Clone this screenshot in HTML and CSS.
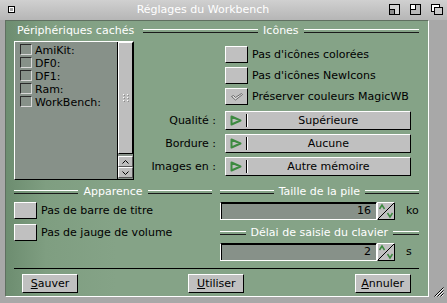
FILE: index.html
```html
<!DOCTYPE html>
<html lang="fr">
<head>
  <meta charset="UTF-8">
  <meta name="viewport" content="width=device-width, initial-scale=1.0">
  <title>Réglages du Workbench</title>
  <link rel="stylesheet" href="styles.css">
</head>
<body>
  <div class="window">
    <div class="titlebar">
      <div class="title-left">
        <svg class="gadget" width="7" height="7" viewBox="0 0 7 7">
          <rect x="0.5" y="0.5" width="6" height="6" fill="#fff" stroke="#000"/>
          <rect x="2" y="2" width="3" height="3" fill="#a0a0a0"/>
        </svg>
      </div>
      <div class="title">Réglages du Workbench</div>
      <div class="title-gadgets">
        <svg class="gadget" width="11" height="11" viewBox="0 0 11 11">
          <rect x="0.5" y="0.5" width="10" height="10" fill="#d4d4d4" stroke="#000"/>
          <rect x="0.5" y="5.5" width="5" height="5" fill="#8c8c8c" stroke="#000"/>
        </svg>
        <svg class="gadget" width="11" height="11" viewBox="0 0 11 11">
          <rect x="0.5" y="0.5" width="10" height="10" fill="#b8b8b8" stroke="#000"/>
          <rect x="0.5" y="0.5" width="5" height="5" fill="#fff" stroke="#000"/>
        </svg>
        <svg class="gadget" width="12" height="11" viewBox="0 0 12 11">
          <rect x="0.5" y="0.5" width="8" height="7" fill="#fff" stroke="#000"/>
          <rect x="3.5" y="3.5" width="8" height="7" fill="#c8c8c8" stroke="#000"/>
        </svg>
      </div>
    </div>

    <div class="frame">
      <div class="panel">
        <div class="section-top">
          <div class="devices">
            <div class="caption">Périphériques cachés</div>
            <div class="listview">
              <div class="list">
                <div class="list-item"><span class="list-box"></span>AmiKit:</div>
                <div class="list-item"><span class="list-box"></span>DF0:</div>
                <div class="list-item"><span class="list-box"></span>DF1:</div>
                <div class="list-item"><span class="list-box"></span>Ram:</div>
                <div class="list-item"><span class="list-box"></span>WorkBench:</div>
              </div>
              <div class="scroller">
                <div class="knob">
                  <svg width="6" height="8" viewBox="0 0 6 8">
                    <rect x="0" y="0" width="1" height="1" fill="#fff"/>
                    <rect x="4" y="0" width="1" height="1" fill="#fff"/>
                    <rect x="0" y="3" width="1" height="1" fill="#fff"/>
                    <rect x="4" y="3" width="1" height="1" fill="#fff"/>
                    <rect x="0" y="6" width="1" height="1" fill="#fff"/>
                    <rect x="4" y="6" width="1" height="1" fill="#fff"/>
                    <rect x="1" y="1" width="1" height="1" fill="#888"/>
                    <rect x="5" y="1" width="1" height="1" fill="#888"/>
                    <rect x="1" y="4" width="1" height="1" fill="#888"/>
                    <rect x="5" y="4" width="1" height="1" fill="#888"/>
                    <rect x="1" y="7" width="1" height="1" fill="#888"/>
                    <rect x="5" y="7" width="1" height="1" fill="#888"/>
                  </svg>
                </div>
                <div class="scroll-arrow">
                  <svg width="7" height="4" viewBox="0 0 7 4"><path d="M0.5 3.5 L3.5 0.5 L6.5 3.5" fill="none" stroke="#000"/></svg>
                </div>
                <div class="scroll-arrow">
                  <svg width="7" height="4" viewBox="0 0 7 4"><path d="M0.5 0.5 L3.5 3.5 L6.5 0.5" fill="none" stroke="#000"/></svg>
                </div>
              </div>
            </div>
          </div>

          <div class="icons">
            <div class="group-title"><span>Icônes</span></div>
            <div class="option"><span class="checkbox"></span>Pas d'icônes colorées</div>
            <div class="option"><span class="checkbox"></span>Pas d'icônes NewIcons</div>
            <div class="option">
              <span class="checkbox">
                <svg width="12" height="8" viewBox="0 0 12 8">
                  <path d="M0.5 3.5 L2.5 2.5 L4.5 4.5 L10.5 0.5 L11.5 1.5 L4.5 7 Z" fill="#e4e4e4" stroke="#6a6a6a" stroke-linejoin="round"/>
                </svg>
              </span>Préserver couleurs MagicWB
            </div>
            <div class="choice first">
              <span class="choice-label">Qualité :</span>
              <div class="cycle">
                <span class="cycle-arrow"><svg width="12" height="11" viewBox="0 0 12 11"><path d="M1.5 1.5 L10.5 5.5 L1.5 9.5 Z" fill="none" stroke="#3d8a40" stroke-width="2" stroke-linejoin="round"/></svg></span>
                <span class="cycle-value">Supérieure</span>
              </div>
            </div>
            <div class="choice">
              <span class="choice-label">Bordure :</span>
              <div class="cycle">
                <span class="cycle-arrow"><svg width="12" height="11" viewBox="0 0 12 11"><path d="M1.5 1.5 L10.5 5.5 L1.5 9.5 Z" fill="none" stroke="#3d8a40" stroke-width="2" stroke-linejoin="round"/></svg></span>
                <span class="cycle-value">Aucune</span>
              </div>
            </div>
            <div class="choice">
              <span class="choice-label">Images en :</span>
              <div class="cycle">
                <span class="cycle-arrow"><svg width="12" height="11" viewBox="0 0 12 11"><path d="M1.5 1.5 L10.5 5.5 L1.5 9.5 Z" fill="none" stroke="#3d8a40" stroke-width="2" stroke-linejoin="round"/></svg></span>
                <span class="cycle-value">Autre mémoire</span>
              </div>
            </div>
          </div>
        </div>

        <div class="section-middle">
          <div class="appearance">
            <div class="group-title"><span>Apparence</span></div>
            <div class="option first"><span class="checkbox"></span>Pas de barre de titre</div>
            <div class="option"><span class="checkbox"></span>Pas de jauge de volume</div>
          </div>
          <div class="numbers">
            <div class="group-title"><span>Taille de la pile</span></div>
            <div class="number-row first">
              <span class="field">16</span>
              <span class="stepper"><svg width="16" height="16" viewBox="0 0 16 16"><line x1="0" y1="16" x2="16" y2="0" stroke="#000"/><path d="M1.5 6 L4 2 L6.5 6" fill="none" stroke="#3d8a40" stroke-width="1.5"/><path d="M9.5 10 L12 14 L14.5 10" fill="none" stroke="#3d8a40" stroke-width="1.5"/></svg></span>
              <span class="unit">ko</span>
            </div>
            <div class="group-title second"><span>Délai de saisie du clavier</span></div>
            <div class="number-row first">
              <span class="field">2</span>
              <span class="stepper"><svg width="16" height="16" viewBox="0 0 16 16"><line x1="0" y1="16" x2="16" y2="0" stroke="#000"/><path d="M1.5 6 L4 2 L6.5 6" fill="none" stroke="#3d8a40" stroke-width="1.5"/><path d="M9.5 10 L12 14 L14.5 10" fill="none" stroke="#3d8a40" stroke-width="1.5"/></svg></span>
              <span class="unit">s</span>
            </div>
          </div>
        </div>

        <div class="separator"></div>

        <div class="buttons">
          <button class="button"><u>S</u>auver</button>
          <button class="button"><u>U</u>tiliser</button>
          <button class="button"><u>A</u>nnuler</button>
        </div>
      </div>
      <div class="side">
        <svg width="10" height="10" viewBox="0 0 10 10">
          <path d="M9.5 0.5 L0.5 9.5 M9.5 3.5 L3.5 9.5 M9.5 6.5 L6.5 9.5" stroke="#000"/>
          <path d="M9.5 1.5 L1.5 9.5 M9.5 4.5 L4.5 9.5 M9.5 7.5 L7.5 9.5" stroke="#fff"/>
        </svg>
      </div>
    </div>
    <div class="bottom-border"></div>
  </div>
</body>
</html>
```

FILE: styles.css
```css
* {
  box-sizing: border-box;
}
body {
  margin: 0;
  font-family: 'DejaVu Sans', sans-serif;
  font-size: 11px;
  color: #000;
  background-color: #a8a8a8;
}
.window {
  width: 447px;
  height: 303px;
  display: flex;
  flex-direction: column;
  background-color: #a8a8a8;
}

/* title bar */
.titlebar {
  height: 20px;
  display: flex;
  align-items: center;
  background: linear-gradient(#d0d0d0, #b6b6b6);
}
.gadget {
  display: block;
}
.title-left {
  width: 20px;
  padding-left: 8px;
  margin-top: -2px;
}
.title {
  flex: 1;
  text-align: center;
  color: #fff;
  line-height: 20px;
  margin-top: -1px;
}
.title-gadgets {
  width: 61px;
  display: flex;
  gap: 10px;
  padding-left: 3px;
  margin-top: -2px;
}

/* body frame */
.frame {
  flex: 1;
  display: flex;
  padding-left: 5px;
}
.panel {
  flex: 1;
  display: flex;
  flex-direction: column;
  padding: 4px 9px 0 8px;
  border-style: solid;
  border-width: 1px;
  border-color: #5f6f60 #fff #fff #5f6f60;
  background: linear-gradient(90deg, #6d8d70 0, #7f9e81 40px, #85a387 110px, #85a387 100%);
}
.side {
  width: 20px;
  display: flex;
  align-items: flex-end;
  padding-left: 5px;
}
.side svg {
  display: block;
}
.bottom-border {
  height: 6px;
}

/* group titles */
.group-title {
  height: 12px;
  display: flex;
  align-items: center;
  gap: 5px;
  color: #fff;
  line-height: 12px;
}
.group-title::before, .group-title::after {
  content: '';
  flex: 1;
  height: 2px;
  border-top: 1px solid #fff;
  border-bottom: 1px solid #1a1a1a;
}
.caption {
  height: 12px;
  line-height: 12px;
  color: #fff;
  padding-left: 3px;
  white-space: nowrap;
}

/* top section */
.section-top {
  display: flex;
  gap: 9px;
}
.devices {
  width: 120px;
}
.listview {
  margin-top: 4px;
  height: 139px;
  display: flex;
  border-style: solid;
  border-width: 1px;
  border-color: #fff #000 #000 #fff;
}
.list {
  flex: 1;
  padding: 2px 0 0 5px;
  background-color: #879189;
  border-right: 1px solid #000;
}
.list-item {
  height: 13px;
  line-height: 13px;
  display: flex;
  gap: 3px;
  white-space: nowrap;
}
.list-box {
  width: 12px;
  height: 11px;
  border-style: solid;
  border-width: 1px;
  border-color: #2a2a2a #d8d8d8 #d8d8d8 #2a2a2a;
}
.scroller {
  width: 15px;
  display: flex;
  flex-direction: column;
  background-color: #879189;
}
.knob {
  flex: 1;
  display: flex;
  align-items: center;
  justify-content: center;
  margin-bottom: 2px;
  background-color: #bebebe;
  border-style: solid;
  border-width: 1px;
  border-color: #fff #000 #000 #fff;
}
.scroll-arrow {
  height: 11px;
  display: flex;
  align-items: center;
  justify-content: center;
  background-color: #bebebe;
  border-style: solid;
  border-width: 1px;
  border-color: #fff #555 #555 #fff;
}
.scroll-arrow:last-child {
  margin-bottom: 1px;
}

.icons {
  flex: 1;
}
.icons .option {
  margin-left: 82px;
}
.option {
  height: 17px;
  line-height: 17px;
  display: flex;
  gap: 4px;
  margin-top: 4px;
  white-space: nowrap;
}
.icons .group-title + .option {
  margin-top: 9px;
}
.checkbox {
  width: 23px;
  height: 17px;
  display: flex;
  align-items: center;
  justify-content: center;
  background-color: #c0c0c0;
  border-style: solid;
  border-width: 1px;
  border-color: #fff #000 #000 #fff;
}
.checkbox svg {
  display: block;
}
.choice {
  height: 19px;
  line-height: 19px;
  display: flex;
  gap: 9px;
  margin-top: 4px;
  padding-right: 8px;
}
.choice.first {
  margin-top: 6px;
}
.choice-label {
  width: 73px;
  text-align: right;
  white-space: nowrap;
}
.cycle {
  flex: 1;
  display: flex;
  background-color: #c0c0c0;
  border-style: solid;
  border-width: 1px;
  border-color: #fff #000 #000 #fff;
  line-height: 17px;
}
.cycle-arrow {
  width: 21px;
  display: flex;
  align-items: center;
  padding-left: 4px;
  margin: 2px 0;
  border-right: 1px solid #000;
  box-shadow: 1px 0 0 #fff;
}
.cycle-arrow svg {
  display: block;
}
.cycle-value {
  flex: 1;
  text-align: center;
}

/* middle section */
.section-middle {
  display: flex;
  gap: 8px;
  margin-top: 6px;
}
.appearance {
  width: 198px;
}
.appearance .option.first {
  margin-top: 4px;
}
.appearance .option + .option {
  margin-top: 5px;
}
.numbers {
  flex: 1;
}
.group-title.second {
  margin-top: 7px;
}
.number-row {
  height: 18px;
  display: flex;
  align-items: center;
  margin-top: 4px;
}
.field {
  width: 157px;
  height: 18px;
  line-height: 16px;
  text-align: right;
  padding-right: 5px;
  background-color: #879189;
  border-style: solid;
  border-width: 1px;
  border-color: #000 #fff #fff #fff;
  box-shadow: inset 1px 1px 0 #000;
}
.stepper {
  width: 18px;
  height: 18px;
  background-color: #c0c0c0;
  border-style: solid;
  border-width: 1px;
  border-color: #fff #000 #000 #fff;
}
.stepper svg {
  display: block;
}
.unit {
  margin-left: 11px;
  line-height: 18px;
}

/* bottom */
.separator {
  height: 1px;
  margin-top: 7px;
  background-color: #000;
}
.buttons {
  display: flex;
  justify-content: space-between;
  margin: 5px 8px 0;
}
.button {
  width: 56px;
  height: 19px;
  padding: 0;
  font-family: 'DejaVu Sans', sans-serif;
  font-size: 11px;
  line-height: 17px;
  color: #000;
  background-color: #c0c0c0;
  border-style: solid;
  border-width: 1px;
  border-color: #fff #000 #000 #fff;
  border-radius: 0;
}
.button u {
  text-decoration-thickness: 1px;
  text-underline-offset: 1px;
}
```
